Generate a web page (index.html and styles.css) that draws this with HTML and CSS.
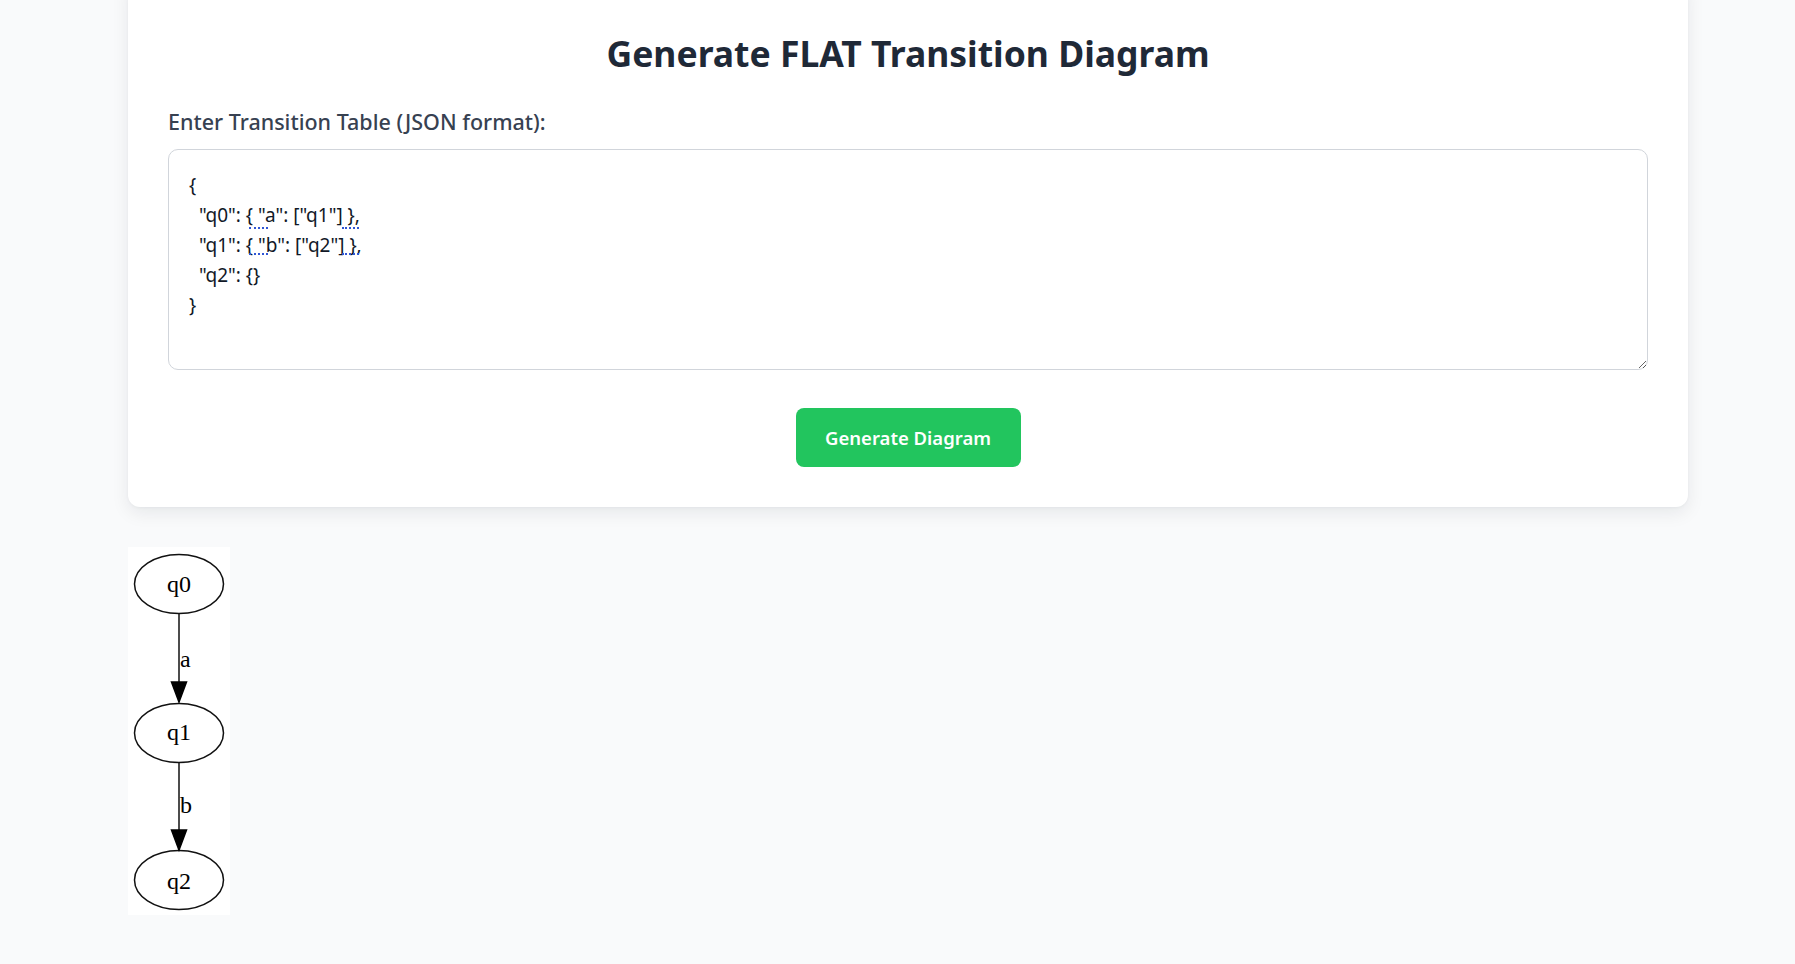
FILE: index.html
```html
<!DOCTYPE html>
<html lang="en">
<head>
<meta charset="utf-8">
<title>Generate FLAT Transition Diagram</title>
<link rel="stylesheet" href="styles.css">
</head>
<body>
<main class="page">
  <section class="card">
    <h1 class="title">Generate FLAT Transition Diagram</h1>
    <label class="field-label" for="table">Enter Transition Table (JSON format):</label>
    <div class="editor">
      <textarea id="table" class="json-input" spellcheck="false">{
  "q0": { "a": ["q1"] },
  "q1": { "b": ["q2"] },
  "q2": {}
}</textarea>
      <span class="spell-mark mark-1a"></span>
      <span class="spell-mark mark-1b"></span>
      <span class="spell-mark mark-2a"></span>
      <span class="spell-mark mark-2b"></span>
    </div>
    <div class="actions">
      <button class="btn-generate" type="button">Generate Diagram</button>
    </div>
  </section>

  <div class="diagram">
    <svg class="graph" width="102" height="368" viewBox="0 0 102 368" xmlns="http://www.w3.org/2000/svg">
      <rect width="102" height="368" fill="#ffffff"/>
      <g fill="none" stroke="#111" stroke-width="1.5">
        <ellipse cx="51" cy="37" rx="44.5" ry="29.5"/>
        <ellipse cx="51" cy="186" rx="44.5" ry="29.5"/>
        <ellipse cx="51" cy="333" rx="44.5" ry="29.5"/>
        <line x1="51" y1="67" x2="51" y2="136"/>
        <line x1="51" y1="216" x2="51" y2="284"/>
      </g>
      <g fill="#000" stroke="#000" stroke-width="1.5">
        <polygon points="43.5,135 58.5,135 51,155"/>
        <polygon points="43.5,283 58.5,283 51,303"/>
      </g>
      <g font-family="'Liberation Serif', 'Times New Roman', serif" font-size="24" fill="#000">
        <text x="51" y="45" text-anchor="middle">q0</text>
        <text x="51" y="193" text-anchor="middle">q1</text>
        <text x="51" y="342" text-anchor="middle">q2</text>
        <text x="52" y="120">a</text>
        <text x="52" y="266">b</text>
      </g>
    </svg>
  </div>
</main>
</body>
</html>
```

FILE: styles.css
```css
* { box-sizing: border-box; }

html, body {
  margin: 0;
  padding: 0;
}

body {
  background: #f9fafb;
  font-family: "Noto Sans", "Open Sans", "Liberation Sans", sans-serif;
  color: #1f2937;
}

.page {
  width: 1560px;
  margin-left: 128px;
  padding-bottom: 40px;
}

.card {
  margin-top: -20px;
  background: #ffffff;
  border-radius: 12px;
  box-shadow: 0 6px 18px rgba(15, 23, 42, 0.08), 0 1px 3px rgba(15, 23, 42, 0.04);
  padding: 53px 40px 40px;
  display: flex;
  flex-direction: column;
}

.title {
  margin: 0 0 35px;
  font-size: 35.5px;
  line-height: 40px;
  font-weight: 700;
  text-align: center;
  color: #1f2937;
}

.field-label {
  font-size: 21.5px;
  line-height: 28px;
  font-weight: 500;
  color: #374151;
  margin-bottom: 13px;
}

.editor {
  position: relative;
}

.json-input {
  display: block;
  width: 100%;
  height: 221px;
  padding: 20px 20px 14px;
  border: 1px solid #d1d5db;
  border-radius: 10px;
  font-family: "Noto Sans", "Open Sans", sans-serif;
  font-size: 19px;
  line-height: 30px;
  color: #111827;
  background: #fff;
  resize: vertical;
  outline: none;
}

.spell-mark {
  position: absolute;
  height: 2px;
  border-bottom: 2px dotted #2f55d4;
}

.mark-1a { left: 81px; width: 19px; top: 78px; }
.mark-1b { left: 174px; width: 17px; top: 78px; }
.mark-2a { left: 81px; width: 19px; top: 104px; }
.mark-2b { left: 174px; width: 17px; top: 104px; }

.actions {
  display: flex;
  justify-content: center;
  margin-top: 38px;
}

.btn-generate {
  background: #22c55e;
  color: #ffffff;
  border: none;
  border-radius: 8px;
  width: 225px;
  height: 59px;
  font-family: "Noto Sans", "Open Sans", sans-serif;
  font-size: 18.5px;
  font-weight: 600;
  cursor: pointer;
}

.diagram {
  margin-top: 40px;
  display: flex;
}

.graph {
  display: block;
}
```
